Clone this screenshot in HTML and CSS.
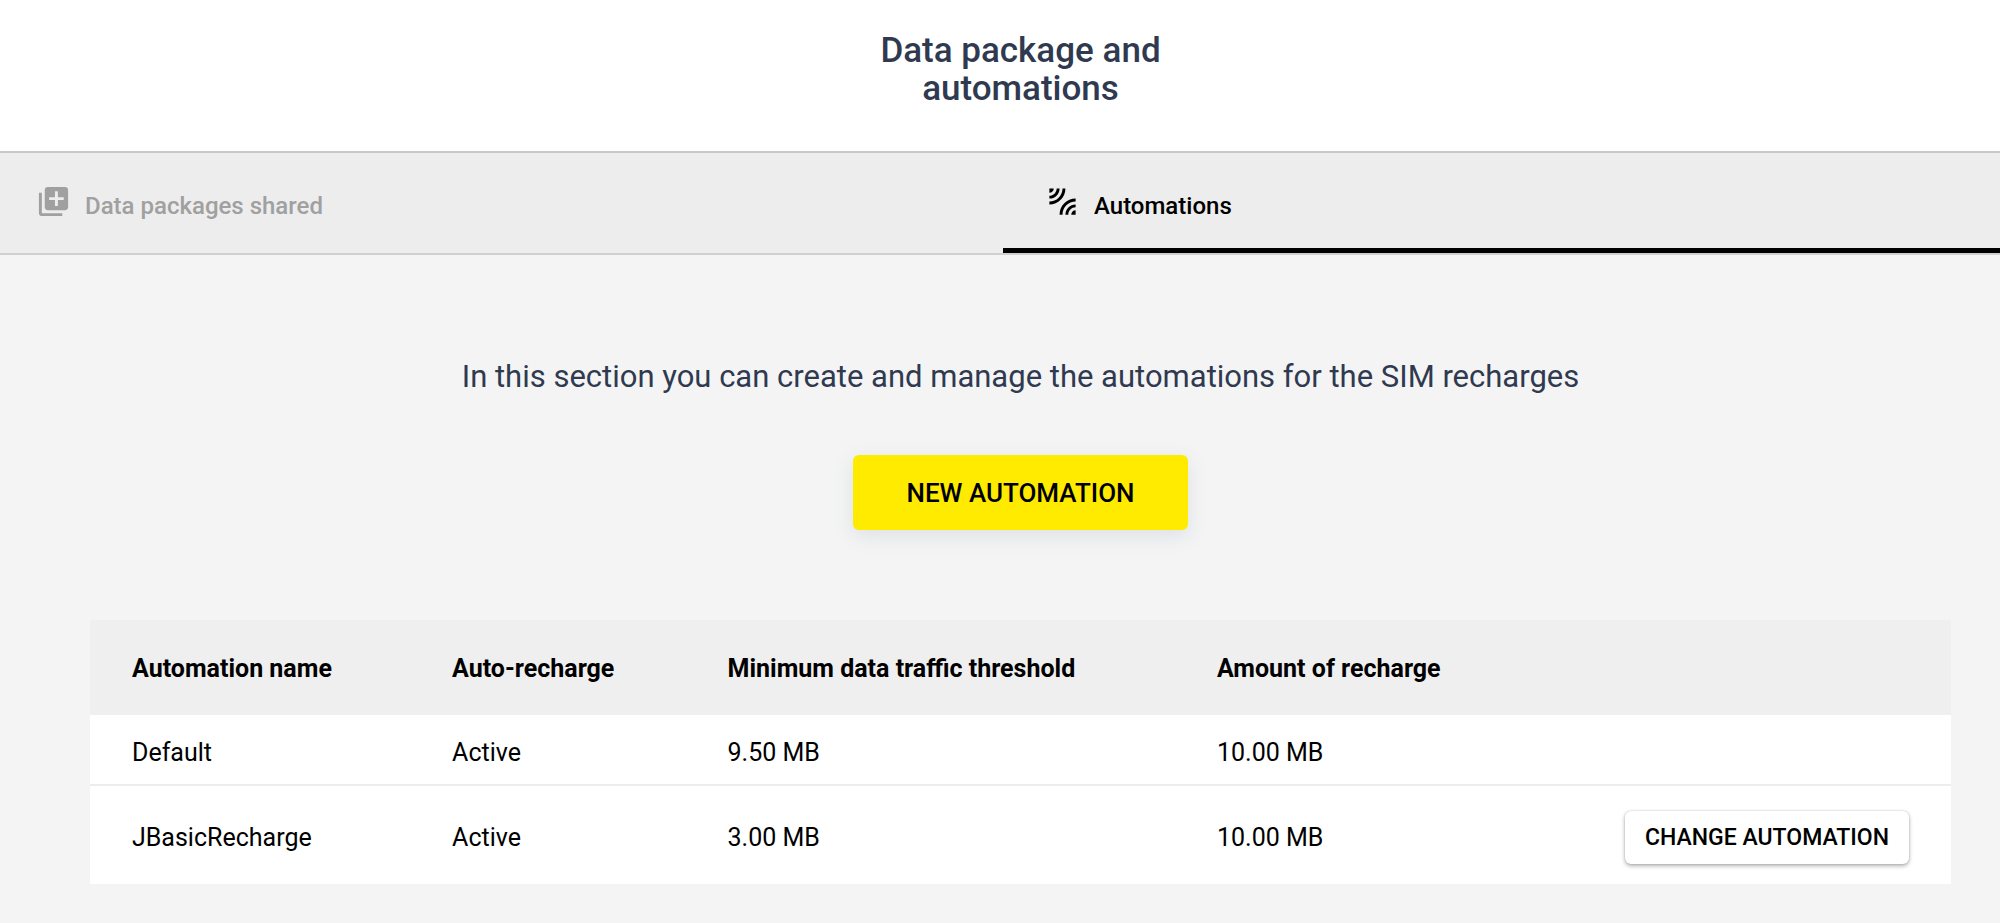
FILE: index.html
```html
<!DOCTYPE html>
<html lang="en">
<head>
<meta charset="utf-8">
<meta name="viewport" content="width=device-width, initial-scale=1">
<title>Data package and automations</title>
<link rel="stylesheet" href="styles.css">
</head>
<body>
<header class="page-header">
  <h1 class="page-title">Data package and automations</h1>
</header>
<div class="tabs" role="tablist">
  <button class="tab" type="button" role="tab" aria-selected="false">
    <svg class="tab-icon" viewBox="0 0 24 24" aria-hidden="true"><path d="M4 6H2v14c0 1.100.9 2 2 2h14v-2H4V6zm16-4H8c-1.100 0-2 .9-2 2v12c0 1.100.9 2 2 2h12c1.100 0 2-.9 2-2V4c0-1.100-.9-2-2-2zm-1 9h-4v4h-2v-4H9V9h4V5h2v4h4v2z"/></svg>
    <span class="tab-label">Data packages shared</span>
  </button>
  <button class="tab tab-active" type="button" role="tab" aria-selected="true">
    <svg class="tab-icon" viewBox="0 0 24 24" aria-hidden="true"><path d="M18 21h3v-3c-1.660 0-3 1.340-3 3zM3 14c6.080 0 11-4.930 11-11h-2c0 4.970-4.030 9-9 9v2zm11 7h2c0-2.760 2.240-5 5-5v-2c-3.870 0-7 3.130-7 7zM3 10c3.870 0 7-3.130 7-7H8c0 2.760-2.240 5-5 5v2zm7 11h2c0-4.970 4.030-9 9-9v-2c-6.070 0-11 4.930-11 11zM3 3v3c1.660 0 3-1.340 3-3H3z"/></svg>
    <span class="tab-label">Automations</span>
  </button>
</div>
<main class="content">
  <p class="intro">In this section you can create and manage the automations for the SIM recharges</p>
  <button class="btn btn-primary" type="button">NEW AUTOMATION</button>
  <table class="automations">
    <colgroup>
      <col class="col-name"><col class="col-auto"><col class="col-threshold"><col class="col-amount"><col>
    </colgroup>
    <thead>
      <tr>
        <th scope="col">Automation name</th>
        <th scope="col">Auto-recharge</th>
        <th scope="col">Minimum data traffic threshold</th>
        <th scope="col">Amount of recharge</th>
        <td></td>
      </tr>
    </thead>
    <tbody>
      <tr>
        <td>Default</td>
        <td>Active</td>
        <td>9.50 MB</td>
        <td>10.00 MB</td>
        <td></td>
      </tr>
      <tr>
        <td>JBasicRecharge</td>
        <td>Active</td>
        <td>3.00 MB</td>
        <td>10.00 MB</td>
        <td class="cell-action"><button class="btn btn-change" type="button">CHANGE AUTOMATION</button></td>
      </tr>
    </tbody>
  </table>
</main>
</body>
</html>
```
FILE: styles.css
```css
* { box-sizing: border-box; }

body {
  margin: 0;
  background: #f4f4f4;
  color: #000;
  font-family: Roboto, "Liberation Sans", sans-serif;
  font-size: 25px;
}

button {
  border: 0;
  color: inherit;
  font-family: inherit;
  cursor: pointer;
}

.page-header {
  padding: 32px 49px 43px 90px;
  background: #fff;
}

.page-title {
  max-width: 320px;
  margin: 0 auto;
  color: #2f3a50;
  font-size: 35px;
  font-weight: 500;
  line-height: 38px;
  text-align: center;
}

.tabs {
  display: grid;
  grid-template-columns: 1003fr 997fr;
  border-top: 2px solid #c8c8c8;
  border-bottom: 2px solid #cfcfcf;
  background: #ededed;
}

.tab {
  display: flex;
  align-items: center;
  gap: 14px;
  height: 100px;
  padding: 2px 36px 0;
  border-bottom: 5px solid transparent;
  background: none;
  color: #a0a0a0;
  font-size: 24px;
  font-weight: 500;
}

.tab-active {
  padding: 2px 42px 0;
  border-bottom-color: #000;
  color: #000;
}

.tab-icon {
  width: 35px;
  height: 35px;
  fill: currentColor;
}

.tab-label {
  padding-top: 8px;
  line-height: 28px;
}

.content {
  display: flex;
  flex-direction: column;
  align-items: center;
  padding: 102px 49px 40px 90px;
}

.intro {
  margin: 0 0 58px;
  color: #2f3a50;
  font-size: 31px;
  line-height: 40px;
  text-align: center;
}

.btn {
  border-radius: 6px;
  font-weight: 500;
  white-space: nowrap;
}

.btn-primary {
  height: 75px;
  margin-bottom: 90px;
  padding: 0 53px;
  background: #ffeb00;
  font-size: 26px;
  box-shadow: 0 6px 20px rgba(70, 100, 130, 0.13);
}

.automations {
  width: 100%;
  border-collapse: collapse;
  table-layout: fixed;
  background: #fff;
}

.automations th,
.automations td {
  padding: 2px 0 0 42px;
  text-align: left;
  line-height: 28px;
}

.automations thead tr {
  height: 95px;
  background: #efefef;
}

.automations tbody td { padding-top: 6px; }

.automations tbody tr { height: 70px; }

.automations tbody tr + tr {
  height: 99px;
  border-top: 2px solid #ededed;
}

.col-name { width: 17.2%; }
.col-auto { width: 14.8%; }
.col-threshold { width: 26.3%; }
.col-amount { width: 20%; }

.automations .cell-action {
  padding: 4px 42px 0 0;
  text-align: right;
}

.btn-change {
  height: 53px;
  padding: 0 20px;
  background: #fff;
  font-size: 23px;
  box-shadow: 0 2px 4px rgba(0, 0, 0, 0.3), 0 0 2px rgba(0, 0, 0, 0.2);
}
```
